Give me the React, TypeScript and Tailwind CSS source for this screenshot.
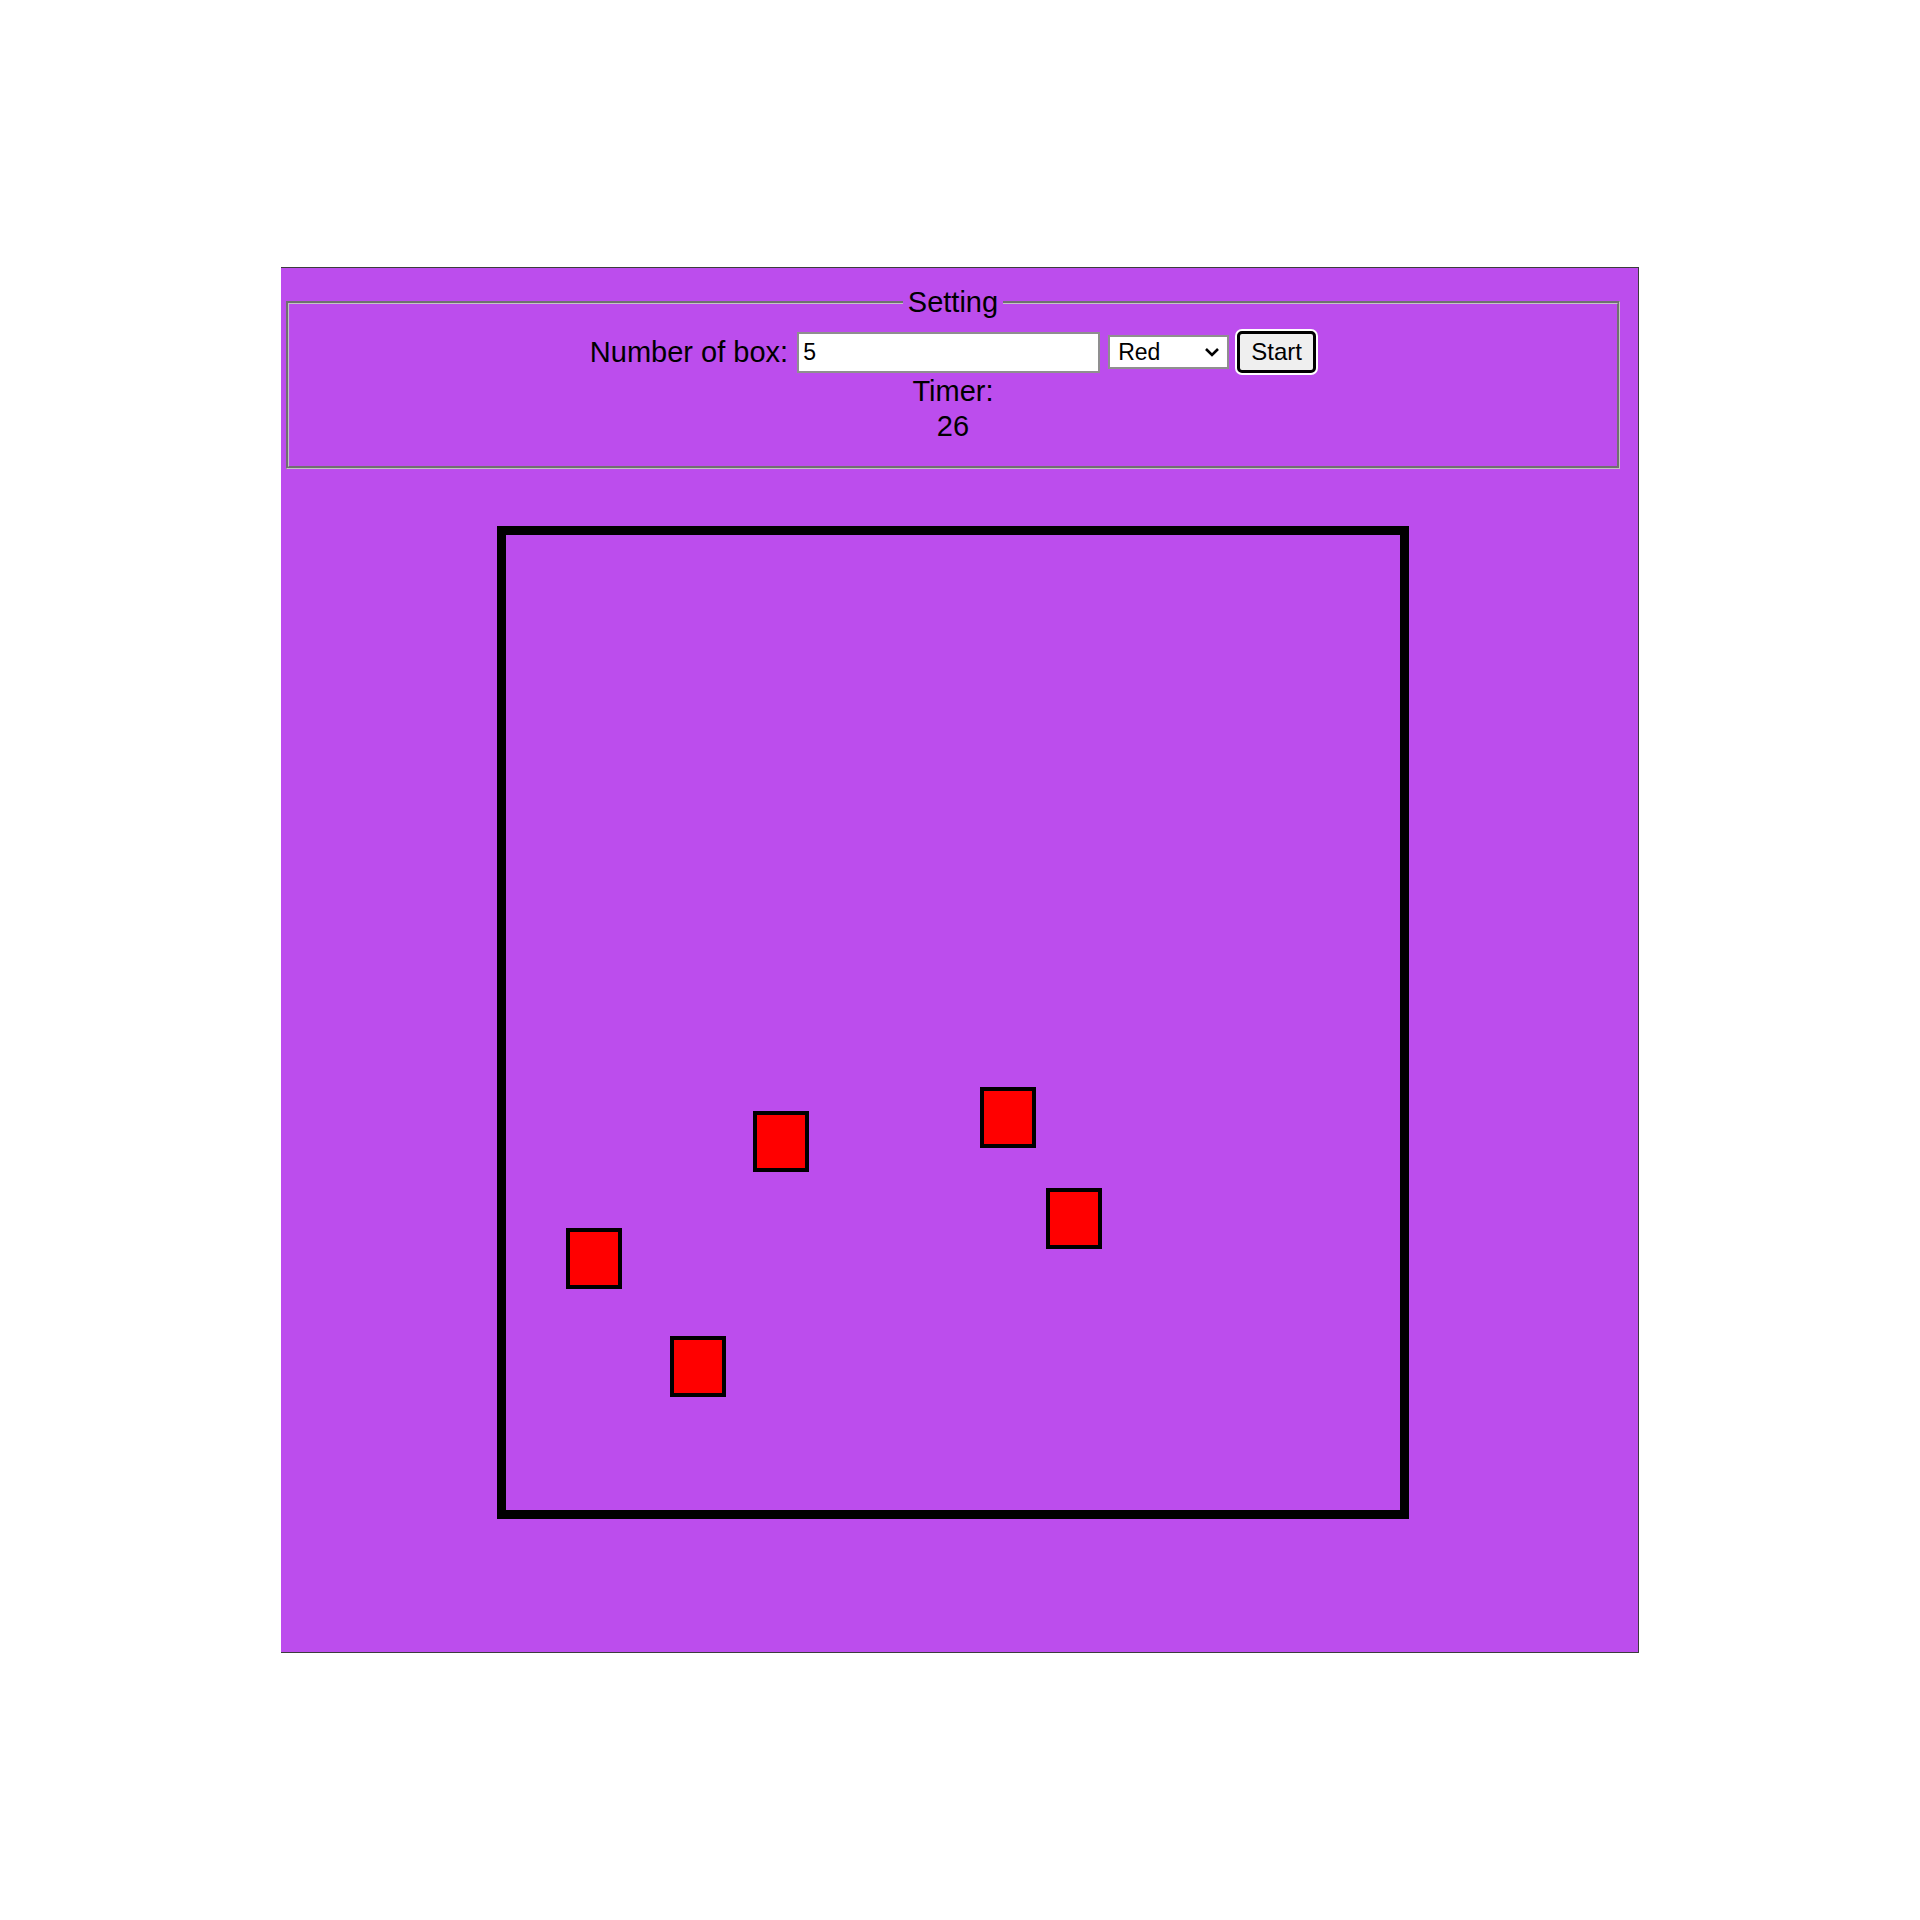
import { useState } from 'react';

const boxes = [
  { left: 247, top: 576 },
  { left: 474, top: 552 },
  { left: 540, top: 653 },
  { left: 60, top: 693 },
  { left: 164, top: 801 },
];

export default function App() {
  const [count, setCount] = useState('5');
  const [color, setColor] = useState('Red');

  return (
    <div className="min-h-screen bg-white pt-[267px] font-['Liberation_Sans',Arial,sans-serif] text-black">
      <div className="ml-[281px] w-[1358px] h-[1386px] bg-[#bc4ded] border-t border-r border-b border-[#3c3c3c] pt-[18px] pl-[5px] pr-[18px]">
        <fieldset className="border-[3px] [border-style:groove] border-[#c4c4c4] pb-[22px]">
          <legend className="mx-auto px-[5px] text-[29px] leading-[32px]">Setting</legend>
          <div className="mt-[13px] flex items-center justify-center">
            <label className="text-[29px] leading-[32px] mr-[9px]">Number of box:</label>
            <input
              className="w-[303px] h-[41px] border-2 border-[#8f8f8f] bg-white pl-[4px] text-[23px] outline-none"
              value={count}
              onChange={e => setCount(e.target.value)}
            />
            <div className="relative ml-[8px]">
              <select
                className="appearance-none w-[121px] h-[34px] border-2 border-[#8f8f8f] bg-white pl-[8px] text-[23px] leading-[28px] outline-none"
                value={color}
                onChange={e => setColor(e.target.value)}
              >
                <option>Red</option>
                <option>Green</option>
                <option>Blue</option>
              </select>
              <svg className="absolute right-[9px] top-[12px] pointer-events-none" width="16" height="10" viewBox="0 0 16 10">
                <path d="M2 2 L8 8 L14 2" fill="none" stroke="#000" strokeWidth="2.6" />
              </svg>
            </div>
            <button className="ml-[8px] w-[79px] h-[42px] rounded-[5px] border-[3px] border-black ring-2 ring-white bg-[#efefef] text-[24px] leading-none">
              Start
            </button>
          </div>
          <div className="mt-[1px] text-center text-[29px] leading-[35px]">
            <div>Timer:</div>
            <div>26</div>
          </div>
        </fieldset>
        <div className="relative mx-auto mt-[57px] w-[912px] h-[993px] border-[9px] border-black">
          {boxes.map((b, i) => (
            <div
              key={i}
              className="absolute w-[56px] h-[61px] border-4 border-black bg-[#ff0000]"
              style={{ left: b.left, top: b.top }}
            />
          ))}
        </div>
      </div>
    </div>
  );
}
